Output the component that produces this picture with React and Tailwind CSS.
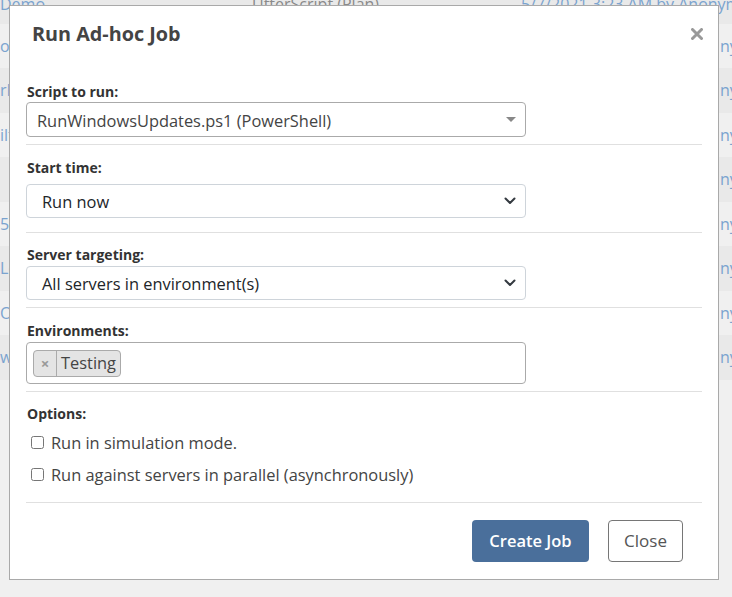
// Run Ad-hoc Job modal over a dimmed jobs table

const rows = [
  { left: 'Demo', mid: 'UtterScript (Plan)', right: '5/7/2021 3:23 AM by Anonymous', top: true },
  { left: 'oSync', right: 'nymous' },
  { left: 'rPatch', right: 'nymous' },
  { left: 'ilter', right: 'nymous' },
  { left: '', right: 'nymous' },
  { left: '5', right: 'nymous' },
  { left: 'Log', right: 'nymous' },
  { left: 'Ob', right: 'nymous' },
  { left: 'ws', right: 'nymous' },
];

const Separator = ({ className }) => (
  <div className={`h-px bg-[#e0e0e0] ${className}`} />
);

const Label = ({ children, className }) => (
  <div className={`text-[14px] leading-[20px] font-bold text-[#333] ${className}`}>
    {children}
  </div>
);

const Chevron = () => (
  <svg width="12" height="8" viewBox="0 0 12 8" className="mr-[9px]">
    <path d="M1.5 1.5 L6 6 L10.5 1.5" fill="none" stroke="#343a40" strokeWidth="2" strokeLinecap="round" strokeLinejoin="round" />
  </svg>
);

const BootSelect = ({ value, className }) => (
  <div className={`w-[500px] h-[34px] border border-[#ced4da] rounded-[4px] bg-white flex items-center justify-between pl-[15px] ${className}`}>
    <span className="text-[16.4px] text-[#212529] pt-[3px]">{value}</span>
    <Chevron />
  </div>
);

export default function App() {
  return (
    <div className="relative w-[732px] h-[597px] overflow-hidden bg-[#f0f0f0]" style={{ fontFamily: '"Open Sans", "Noto Sans", sans-serif' }}>
      {/* table behind the modal */}
      <div className="-mt-[21px]">
        {rows.map((r, i) => (
          <div key={i} className={`relative h-[44.5px] flex items-center text-[16px] ${i % 2 === 0 ? 'bg-[#e9e9e9]' : 'bg-[#f0f0f0]'}`}>
            <span className={`absolute left-0 text-[#7aa3cf] ${r.top ? 'top-[13px]' : ''}`}>{r.left}</span>
            {r.mid && <span className="absolute left-[252px] top-[13px] text-[#8a8a8a]">{r.mid}</span>}
            <span className={`absolute whitespace-nowrap text-[#7aa3cf] ${r.top ? 'left-[521px] top-[13px]' : 'left-[720px]'}`}>{r.right}</span>
          </div>
        ))}
      </div>

      {/* modal */}
      <div className="absolute left-[9px] top-[5px] w-[710px] bg-white border border-[#a9a9a9] px-[16px] pt-[16px] pb-[17px]">
        <div className="flex items-center justify-between h-[24px]">
          <h2 className="ml-[6px] text-[19.8px] font-bold text-[#444]">Run Ad-hoc Job</h2>
          <svg width="12" height="12" viewBox="0 0 12 12" className="mr-[-1px]">
            <path d="M1.5 1.5 L10.5 10.5 M10.5 1.5 L1.5 10.5" stroke="#999" strokeWidth="3" strokeLinecap="round" />
          </svg>
        </div>

        <Label className="mt-[36px] ml-[1px]">Script to run:</Label>
        <div className="w-[500px] h-[35px] border border-[#aaa] rounded-[4px] flex items-center justify-between pl-[10px]">
          <span className="text-[16.4px] text-[#444] pt-[4px]">RunWindowsUpdates.ps1 (PowerShell)</span>
          <svg width="10" height="5" viewBox="0 0 10 5" className="mr-[9px]">
            <path d="M0 0 L10 0 L5 5 Z" fill="#888" />
          </svg>
        </div>
        <Separator className="mt-[7px]" />

        <Label className="mt-[13px] ml-[1px]">Start time:</Label>
        <BootSelect value="Run now" className="mt-[6px]" />
        <Separator className="mt-[14px]" />

        <Label className="mt-[12px] ml-[1px]">Server targeting:</Label>
        <BootSelect value="All servers in environment(s)" className="mt-[1px]" />
        <Separator className="mt-[7px]" />

        <Label className="mt-[13px] ml-[1px]">Environments:</Label>
        <div className="mt-[1px] w-[500px] h-[42px] border border-[#aaa] rounded-[4px] flex items-center pl-[6px]">
          <div className="h-[27px] flex items-center bg-[#e4e4e4] border border-[#aaa] rounded-[4px]">
            <span className="w-[23px] h-full flex items-center justify-center border-r border-[#aaa] text-[15px] font-bold text-[#999]">×</span>
            <span className="px-[4px] text-[16.4px] text-[#444]">Testing</span>
          </div>
        </div>
        <Separator className="mt-[7px]" />

        <Label className="mt-[12px] ml-[1px]">Options:</Label>
        <label className="mt-[6px] h-[24px] flex items-center pl-[5px] gap-[7px]">
          <input type="checkbox" className="w-[13px] h-[13px] m-0" />
          <span className="text-[16.4px] text-[#444] pt-[2px]">Run in simulation mode.</span>
        </label>
        <label className="mt-[8px] h-[24px] flex items-center pl-[5px] gap-[7px]">
          <input type="checkbox" className="w-[13px] h-[13px] m-0" />
          <span className="text-[16.4px] text-[#444] pt-[2px]">Run against servers in parallel (asynchronously)</span>
        </label>
        <Separator className="mt-[16px]" />

        <div className="mt-[17px] flex justify-end gap-[19px] pr-[19px]">
          <button className="w-[117px] h-[42px] rounded-[4px] bg-[#4a6f9b] text-white text-[16.5px] font-semibold">Create Job</button>
          <button className="w-[75px] h-[42px] rounded-[4px] bg-white border border-[#767676] text-[#555] text-[17px]">Close</button>
        </div>
      </div>
    </div>
  );
}
